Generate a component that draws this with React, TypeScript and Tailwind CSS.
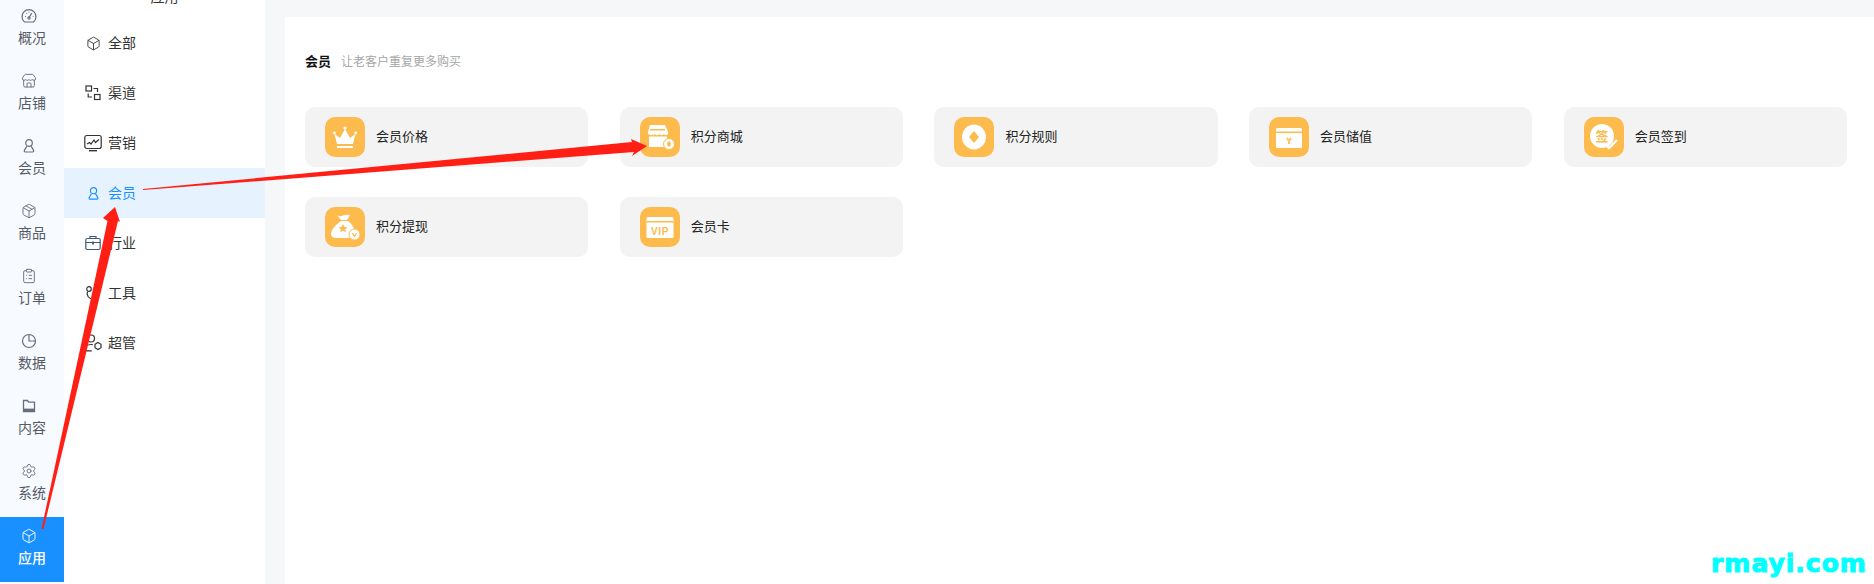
import React from "react";
import { Store, Box, Package, ClipboardList, Settings } from "lucide-react";

const FONT = "[font-family:'Liberation_Sans','Noto_Sans_CJK_SC',sans-serif]";

function GaugeIcon({ className = "" }: { className?: string }) {
  return (
    <svg viewBox="0 0 16 16" fill="none" stroke="currentColor" strokeWidth="1.2" className={className}>
      <path d="M3.500 14A7 7 0 1 1 12.500 14z" />
      <path d="M8 9.500 10.800 5.200M4 8.500h.8M5.500 5.200l.5.5M8 3.800v.8M11.800 8.500h.6" />
      <circle cx="8" cy="10" r="1.100" />
    </svg>
  );
}
function UserIcon({ className = "" }: { className?: string }) {
  return (
    <svg viewBox="0 0 16 16" fill="none" stroke="currentColor" strokeWidth="1.2" className={className}>
      <circle cx="8" cy="5" r="3.300" />
      <path d="M5.800 8.200 3.400 12.400c-.4.800 0 1.600.9 1.600h7.400c.9 0 1.300-.8.900-1.600L10.200 8.200" />
    </svg>
  );
}
function PieIcon({ className = "" }: { className?: string }) {
  return (
    <svg viewBox="0 0 16 16" fill="none" stroke="currentColor" strokeWidth="1.2" className={className}>
      <circle cx="8" cy="8" r="6.500" />
      <path d="M8 1.500V8h6.500" />
    </svg>
  );
}
function FolderIcon({ className = "" }: { className?: string }) {
  return (
    <svg viewBox="0 0 16 16" fill="none" stroke="currentColor" strokeWidth="1.300" className={className}>
      <path d="M2.500 2.500h4l1.200 1.600h5.800v9.400h-11z" />
      <path d="M3 11.800h10" strokeWidth="2.400" />
    </svg>
  );
}
function ChannelIcon({ className = "" }: { className?: string }) {
  return (
    <svg viewBox="0 0 16 16" fill="none" stroke="currentColor" strokeWidth="1.200" className={className}>
      <rect x="1" y="1" width="5.500" height="5" />
      <rect x="9.500" y="9.500" width="5.500" height="5" />
      <path d="M8.500 3.500h4v3.500M7 12H3.200V8.500" />
    </svg>
  );
}
function MonitorIcon({ className = "" }: { className?: string }) {
  return (
    <svg viewBox="0 0 18 18" fill="none" stroke="currentColor" strokeWidth="1.200" className={className}>
      <rect x="0.800" y="1.500" width="16.400" height="13" rx="2" />
      <path d="M3 10l2.500-1.500 1.500 1.500L10 6l1.500 2.500L15 5.500" />
      <path d="M5 16.700h8" strokeWidth="1.400" />
    </svg>
  );
}
function CaseIcon({ className = "" }: { className?: string }) {
  return (
    <svg viewBox="0 0 16 16" fill="none" stroke="#3f5a78" strokeWidth="1.200" className={className}>
      <rect x="0.800" y="3.500" width="14.400" height="11" rx="1.500" />
      <path d="M5 3.500V1.500h6v2M.8 7.500h14.400" />
      <path d="M8 6.500v3" strokeWidth="1.800" />
    </svg>
  );
}
function ToolIcon({ className = "" }: { className?: string }) {
  return (
    <svg viewBox="0 0 16 16" fill="none" stroke="currentColor" strokeWidth="1.200" className={className}>
      <path d="M2.500 6.500A5.500 5.500 0 0 0 8 14a5 5 0 0 0 5-4" />
      <circle cx="4" cy="4" r="2.300" />
      <path d="M10 3l3-1.500L14.500 4 12 6.500z" />
    </svg>
  );
}
function AdminIcon({ className = "" }: { className?: string }) {
  return (
    <svg viewBox="0 0 18 18" fill="none" stroke="currentColor" strokeWidth="1.200" className={className}>
      <circle cx="7" cy="4.500" r="3.500" />
      <path d="M.8 16.500c0-3.500 2.500-6 6.200-6 .7 0 1.300.1 1.900.3M.8 16.800h7" />
      <path d="M14 8.500l3 1.750v3.500l-3 1.750-3-1.750v-3.500z" />
    </svg>
  );
}

function CardIcon({ children }: { children: React.ReactNode }) {
  return (
    <svg viewBox="0 0 40 40" className="h-10 w-10 shrink-0">
      <rect width="40" height="40" rx="10" fill="#fdba4d" />
      {children}
    </svg>
  );
}
const O = "#fdba4d";
const W = "#ffffff";

const Crown = () => (
  <CardIcon>
    <path d="M12 27 9.500 17l5.500 4L20 12l5 9 5.500-4L28 27z" fill={W} />
    <circle cx="20" cy="11" r="1.600" fill={W} />
    <circle cx="9.300" cy="16" r="1.400" fill={W} />
    <circle cx="30.700" cy="16" r="1.400" fill={W} />
    <rect x="12" y="29" width="16" height="2" fill={W} />
  </CardIcon>
);
const Shop = () => (
  <CardIcon>
    <path d="M10 8h15l3 7v1.500c0 2-3.500 2-4 .5-.7 1.500-4 1.500-4.500 0-.6 1.500-4 1.500-4.500 0-.6 1.500-6.500 1.500-7-.5V15z" fill={W} />
    <rect x="10" y="12" width="15" height="1.500" fill={O} />
    <rect x="9" y="19.500" width="18" height="10.500" fill={W} />
    <circle cx="29" cy="27" r="5.500" fill={W} stroke={O} strokeWidth="1" />
    <ellipse cx="29" cy="27" rx="1.800" ry="2.800" fill={O} />
  </CardIcon>
);
const CoinIcon = () => (
  <CardIcon>
    <ellipse cx="20" cy="20" rx="12" ry="12.500" fill={W} />
    <path d="M20 14l5 6-5 6-5-6z" fill={O} />
  </CardIcon>
);
const Wallet = () => (
  <CardIcon>
    <rect x="7" y="11" width="26" height="20" rx="1.500" fill={W} />
    <rect x="7" y="14.500" width="26" height="1.500" fill={O} />
    <path d="M18 20l2 2 2-2 .6 3-1.600 1v3h-2v-3l-1.600-1z" fill={O} opacity=".85" />
  </CardIcon>
);
const Sign = () => (
  <CardIcon>
    <circle cx="18" cy="19" r="12" fill={W} />
    <text x="18" y="24" textAnchor="middle" fontSize="13" fontWeight="700" fill={O} className={FONT}>签</text>
    <path d="M21 27l4 4 8-8" fill="none" stroke={W} strokeWidth="2.400" />
  </CardIcon>
);
const Bag = () => (
  <CardIcon>
    <path d="M12 8c2 1.500 4 1.500 6 .5 2-1 4-1 7-.5l-3 5h-6z" fill={W} />
    <path d="M16 14h7c2.500 2 6 5.500 6.500 9-2 .5-4.500 3.500-3.500 8H11c-3 0-5-1.500-5-4 0-5 6-10 10-13z" fill={W} />
    <path d="M18 17l1.400 3 3.100.3-2.300 2 .7 3-2.900-1.600-2.900 1.600.7-3-2.300-2 3.100-.3z" fill={O} />
    <circle cx="29.500" cy="27.500" r="5.500" fill={W} stroke={O} strokeWidth="1" />
    <path d="M27.500 26l2 3.500 2-3.500" fill="none" stroke={O} strokeWidth="1.300" />
  </CardIcon>
);
const Vip = () => (
  <CardIcon>
    <rect x="6.500" y="10" width="27" height="21" rx="1.500" fill={W} />
    <rect x="6.500" y="14" width="27" height="1.500" fill={O} />
    <text x="20" y="27.500" textAnchor="middle" fontSize="10" fontWeight="700" letterSpacing=".6" fill={O} className={FONT}>VIP</text>
  </CardIcon>
);

const rail = [
  { label: "概况", Icon: GaugeIcon },
  { label: "店铺", Icon: Store },
  { label: "会员", Icon: UserIcon },
  { label: "商品", Icon: Package },
  { label: "订单", Icon: ClipboardList },
  { label: "数据", Icon: PieIcon },
  { label: "内容", Icon: FolderIcon },
  { label: "系统", Icon: Settings },
  { label: "应用", Icon: Box, active: true },
];

const menu = [
  { label: "全部", icon: <Box className="h-[15px] w-[15px]" strokeWidth={1.4} /> },
  { label: "渠道", icon: <ChannelIcon className="h-4 w-4" /> },
  { label: "营销", icon: <MonitorIcon className="h-[18px] w-[18px]" /> },
  { label: "会员", icon: <UserIcon className="h-[15px] w-[15px]" />, active: true },
  { label: "行业", icon: <CaseIcon className="h-4 w-4" /> },
  { label: "工具", icon: <ToolIcon className="h-4 w-4" /> },
  { label: "超管", icon: <AdminIcon className="h-[18px] w-[18px]" /> },
];

const cards = [
  { label: "会员价格", icon: <Crown /> },
  { label: "积分商城", icon: <Shop /> },
  { label: "积分规则", icon: <CoinIcon /> },
  { label: "会员储值", icon: <Wallet /> },
  { label: "会员签到", icon: <Sign /> },
  { label: "积分提现", icon: <Bag /> },
  { label: "会员卡", icon: <Vip /> },
];

export default function App() {
  return (
    <div className={`relative flex h-[584px] w-full overflow-hidden bg-[#f5f7f9] ${FONT}`}>
      <aside className="w-16 shrink-0 bg-[#f7faff]">
        <div className="-mt-[3px] flex flex-col">
          {rail.map(({ label, Icon, active }) => (
            <div
              key={label}
              className={`flex h-[65px] flex-col items-center pt-[11px] text-sm ${
                active ? "bg-[#1890ff] font-medium text-white" : "text-[#555b66]"
              }`}
            >
              <Icon className={`mr-[6px] h-4 w-4 ${active ? "text-white" : "text-[#666e7e]"}`} strokeWidth={1.4} />
              <span className="mt-[4px] leading-5">{label}</span>
            </div>
          ))}
        </div>
      </aside>

      <nav className="w-[201px] shrink-0 bg-white text-sm text-[#333333]">
        <div className="-mt-[13px] h-[31px] text-center leading-5">应用</div>
        {menu.map((m) => (
          <div
            key={m.label}
            className={`flex h-[50px] items-center pl-5 ${m.active ? "bg-[#e6f3fe] text-[#1890ff]" : ""}`}
          >
            <span className="flex w-[18px] justify-center">{m.icon}</span>
            <span className="ml-[6px]">{m.label}</span>
          </div>
        ))}
      </nav>

      <main className="ml-5 mt-[17px] flex-1 bg-white pl-5 pr-[27px]">
        <div className="flex h-[76px] items-center pt-[14px]">
          <span className="text-[13px] font-bold text-[#111111]">会员</span>
          <span className="ml-[10px] text-xs text-[#a6a6a6]">让老客户重复更多购买</span>
        </div>
        <div className="mt-[14px] grid grid-cols-5 gap-x-[31.5px] gap-y-[30px]">
          {cards.map((c) => (
            <div key={c.label} className="flex h-[60px] items-center rounded-[10px] bg-[#f3f3f3] pl-5">
              {c.icon}
              <span className="ml-[11px] text-[13px] text-[#222222]">{c.label}</span>
            </div>
          ))}
        </div>
      </main>

      <svg className="pointer-events-none absolute left-0 top-0" width="1874" height="584">
        <path d="M41.500 529 107.500 221 103 218 115 207 120 222 118 221 43.500 529z" fill="#ff1f14" />
        <path d="M143 189 632 142 631 139 647 146 632 156 634 152 143 190z" fill="#ff1f14" />
      </svg>

      <div className="absolute left-[1711px] top-[548px] text-[25px] font-bold leading-8 tracking-[1px] text-[#00ffff] [font-family:'DejaVu_Sans',sans-serif] [-webkit-text-stroke:1px_#00ffff]">
        rmayi.com
      </div>
    </div>
  );
}
